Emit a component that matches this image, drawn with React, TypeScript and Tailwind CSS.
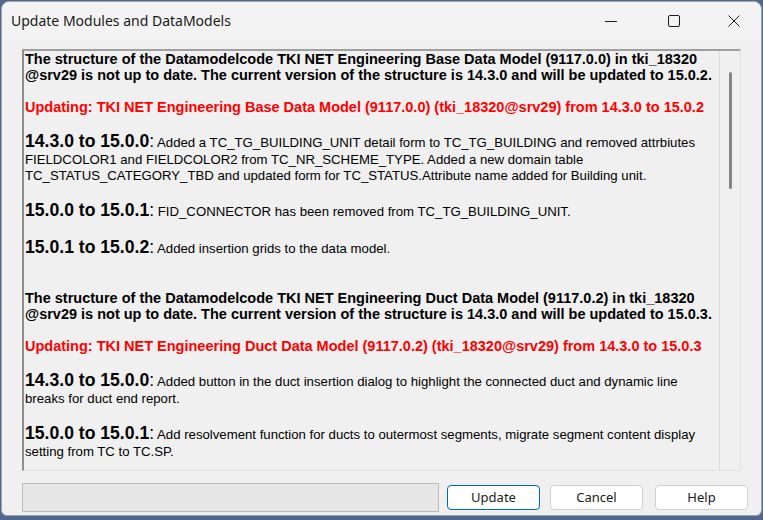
import React from 'react'

const rtf = { fontFamily: '"Liberation Sans", Arial, sans-serif' }
const ui = { fontFamily: '"Noto Sans", "Open Sans", sans-serif' }

function Blank() {
  return <div className="h-[16px]" />
}

function BoldLine({ children, red }: { children: React.ReactNode; red?: boolean }) {
  return (
    <div className={`h-[16px] leading-[16px] text-[14.5px] font-bold whitespace-nowrap ${red ? 'text-[#ff0000]' : 'text-black'}`}>
      {children}
    </div>
  )
}

function Heading({ version, text }: { version: string; text: string }) {
  return (
    <div className="h-[21px] leading-[21px] whitespace-nowrap text-black">
      <span className="text-[17.6px] font-bold">{version}</span>
      <span className="text-[17.6px]">:</span>
      <span className="text-[13.2px]"> {text}</span>
    </div>
  )
}

function BodyLine({ children }: { children: React.ReactNode }) {
  return <div className="h-[16px] leading-[16px] text-[13.2px] text-black whitespace-nowrap">{children}</div>
}

function Button({ label, primary, className }: { label: string; primary?: boolean; className?: string }) {
  return (
    <button
      style={ui}
      className={`h-[25px] w-[93px] shrink-0 rounded-[4px] bg-white text-[13px] text-[#1a1a1a] border ${
        primary ? 'border-[#0067c0]' : 'border-[#d0d0d0]'
      } ${className ?? ''}`}
    >
      {label}
    </button>
  )
}

export default function App() {
  return (
    <div className="w-[763px] h-[520px] bg-[#52678a] pl-[1px] pr-[1px] pt-[1px] pb-[4px] overflow-hidden">
      <div className="h-full flex flex-col bg-[#f0f0f0] rounded-t-[8px] rounded-b-[6px] border border-[#9aa6b8]">
        {/* title bar */}
        <div className="h-[37px] flex items-center bg-[#f3f3f3] rounded-t-[8px] shrink-0">
          <div style={ui} className="pl-[9px] text-[14px] text-[#1a1a1a] flex-1">
            Update Modules and DataModels
          </div>
          <div className="flex items-center h-full">
            <div className="w-[46px] h-full flex items-center justify-center mr-[17px]">
              <svg width="12" height="12" viewBox="0 0 12 12">
                <line x1="0" y1="6.5" x2="12" y2="6.5" stroke="#1a1a1a" strokeWidth="1" />
              </svg>
            </div>
            <div className="w-[46px] h-full flex items-center justify-center mr-[14px]">
              <svg width="12" height="12" viewBox="0 0 12 12">
                <rect x="0.5" y="0.5" width="11" height="11" rx="1.5" fill="none" stroke="#1a1a1a" strokeWidth="1" />
              </svg>
            </div>
            <div className="w-[46px] h-full flex items-center justify-center mr-[4px]">
              <svg width="12" height="12" viewBox="0 0 12 12">
                <path d="M0.5 0.5 L11.5 11.5 M11.5 0.5 L0.5 11.5" stroke="#1a1a1a" strokeWidth="1" />
              </svg>
            </div>
          </div>
        </div>

        <div className="flex-1 flex flex-col pl-[20px] pt-[10px]">
          {/* rich text box */}
          <div className="w-[719px] h-[422px] flex border-t-2 border-l-2 border-t-[#a0a0a0] border-l-[#8f8f8f] border-r border-b border-r-[#e3e3e3] border-b-[#e3e3e3] bg-[#f0f0f0] overflow-hidden">
            <div style={rtf} className="flex-1 pl-[1px] overflow-hidden">
              <BoldLine>The structure of the Datamodelcode TKI NET Engineering Base Data Model (9117.0.0) in tki_18320</BoldLine>
              <BoldLine>@srv29 is not up to date. The current version of the structure is 14.3.0 and will be updated to 15.0.2.</BoldLine>
              <Blank />
              <BoldLine red>Updating: TKI NET Engineering Base Data Model (9117.0.0) (tki_18320@srv29) from 14.3.0 to 15.0.2</BoldLine>
              <Blank />
              <Heading version="14.3.0 to 15.0.0" text="Added a TC_TG_BUILDING_UNIT detail form to TC_TG_BUILDING and removed attrbiutes" />
              <BodyLine>FIELDCOLOR1 and FIELDCOLOR2 from TC_NR_SCHEME_TYPE. Added a new domain table</BodyLine>
              <BodyLine>TC_STATUS_CATEGORY_TBD and updated form for TC_STATUS.Attribute name added for Building unit.</BodyLine>
              <Blank />
              <Heading version="15.0.0 to 15.0.1" text="FID_CONNECTOR has been removed from TC_TG_BUILDING_UNIT." />
              <Blank />
              <Heading version="15.0.1 to 15.0.2" text="Added insertion grids to the data model." />
              <Blank />
              <Blank />
              <BoldLine>The structure of the Datamodelcode TKI NET Engineering Duct Data Model (9117.0.2) in tki_18320</BoldLine>
              <BoldLine>@srv29 is not up to date. The current version of the structure is 14.3.0 and will be updated to 15.0.3.</BoldLine>
              <Blank />
              <BoldLine red>Updating: TKI NET Engineering Duct Data Model (9117.0.2) (tki_18320@srv29) from 14.3.0 to 15.0.3</BoldLine>
              <Blank />
              <Heading version="14.3.0 to 15.0.0" text="Added button in the duct insertion dialog to highlight the connected duct and dynamic line" />
              <BodyLine>breaks for duct end report.</BodyLine>
              <Blank />
              <Heading version="15.0.0 to 15.0.1" text="Add resolvement function for ducts to outermost segments, migrate segment content display" />
              <BodyLine>setting from TC to TC.SP.</BodyLine>
            </div>
            {/* scrollbar */}
            <div className="w-[21px] shrink-0 border-l border-l-[#dcdcdc] pt-[21px] flex justify-center">
              <div className="w-[3px] h-[117px] rounded-full bg-[#858585]" />
            </div>
          </div>

          {/* footer */}
          <div className="mt-[12px] flex items-center">
            <div className="w-[417px] h-[29px] shrink-0 bg-[#e6e6e6] border border-[#bcbcbc]" />
            <Button label="Update" primary className="ml-[8px]" />
            <Button label="Cancel" className="ml-[10px]" />
            <Button label="Help" className="ml-[12px]" />
          </div>
        </div>
      </div>
    </div>
  )
}
